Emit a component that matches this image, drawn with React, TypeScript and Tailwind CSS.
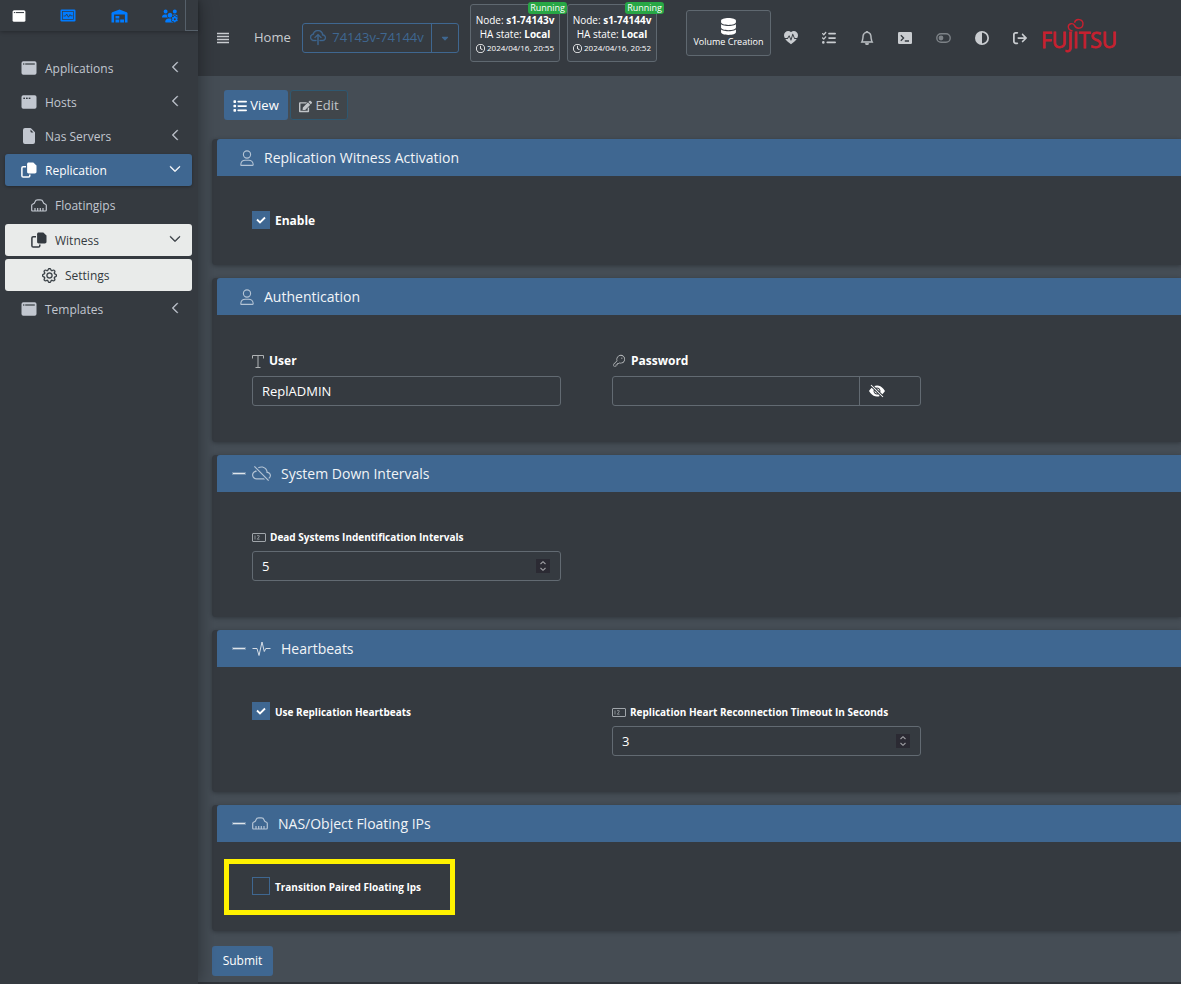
import React from 'react';
import {
  FaListCheck,
  FaCircleHalfStroke,
  FaArrowRightFromBracket,
  FaDatabase,
  FaRegClock,
  FaList,
  FaUsersGear,
  FaCaretDown,
} from 'react-icons/fa6';
import { FaEdit } from 'react-icons/fa';
import {
  BsBell,
  BsChevronDown,
  BsChevronLeft,
  BsCloudSlash,
  BsCloudUpload,
  BsEyeSlashFill,
  BsFileEarmarkFill,
  BsGear,
  BsHeartPulseFill,
} from 'react-icons/bs';
import { PiKeyLight } from 'react-icons/pi';

interface IconProps {
  className?: string;
}

const WindowIcon: React.FC<IconProps & { dots?: boolean }> = ({ className, dots }) => (
  <svg viewBox="0 0 16 14" className={className} aria-hidden="true">
    <rect x="0.5" y="0.3" width="15" height="13.4" rx="1.8" fill="currentColor" />
    {dots ? (
      <g fill="#343a40">
        <rect x="2.3" y="2.6" width="1.7" height="1.4" />
        <rect x="5" y="2.6" width="1.7" height="1.4" />
        <rect x="7.7" y="2.6" width="1.7" height="1.4" />
      </g>
    ) : (
      <g fill="#343a40">
        <rect x="2" y="2.4" width="1.4" height="1.2" />
        <rect x="4.2" y="2.4" width="9.6" height="1.2" />
      </g>
    )}
  </svg>
);

const MonitorIcon: React.FC<IconProps> = ({ className }) => (
  <svg viewBox="0 0 16 13" className={className} aria-hidden="true">
    <rect x="0.5" y="0.5" width="15" height="12" rx="1.2" fill="currentColor" />
    <rect x="2.6" y="2.6" width="10.8" height="7.8" fill="none" stroke="#343a40" strokeWidth="0.7" />
    <path d="M3.5 7h2l1.2-2 1.8 3.2L10 5.5l.8 1.3h1.8" fill="none" stroke="#343a40" strokeWidth="0.8" />
  </svg>
);

const WarehouseIcon: React.FC<IconProps> = ({ className }) => (
  <svg viewBox="0 0 16 14" className={className} fill="currentColor" aria-hidden="true">
    <path d="M8 .4 15.2 3.2c.5.2.8.6.8 1.1V13.6h-2.6V5.6H2.6v8H0V4.3c0-.5.3-.9.8-1.1z" />
    <path d="M4 7h3.8v2.6H4zM4 10.6h3.8v3H4zM8.7 10.6h3.8v3H8.7z" />
  </svg>
);

const CopyIcon: React.FC<IconProps> = ({ className }) => (
  <svg viewBox="0 0 16 16" className={className} aria-hidden="true">
    <path
      d="M5 4.8H2.2c-.7 0-1.3.6-1.3 1.3v7.6c0 .7.6 1.3 1.3 1.3h5.3c.7 0 1.3-.6 1.3-1.3V12.5"
      fill="none"
      stroke="currentColor"
      strokeWidth="1.5"
    />
    <path d="M7.7.5h4.6l3.2 3v6.2c0 1-.7 1.7-1.7 1.7H7.7c-1 0-1.6-.7-1.6-1.7V2.2c0-1 .6-1.7 1.6-1.7z" fill="currentColor" />
  </svg>
);

const EthernetIcon: React.FC<IconProps> = ({ className }) => (
  <svg viewBox="0 0 16 13" className={className} fill="none" stroke="currentColor" strokeWidth="1.2" aria-hidden="true">
    <path d="M.7 11V6.5c0-.6.3-1 .8-1.2L3.2 4.4 4 2.7C4.4 1.5 5.5.9 6.7.9h2.6c1.2 0 2.3.6 2.7 1.8l.8 1.7 1.7.9c.5.2.8.6.8 1.2V11c0 .6-.4 1-1 1H1.7c-.6 0-1-.4-1-1z" />
    <path d="M4 12V9M6.7 12V9M9.3 12V9M12 12V9" />
  </svg>
);

const PersonIcon: React.FC<IconProps> = ({ className }) => (
  <svg viewBox="0 0 14 16" className={className} fill="none" stroke="currentColor" strokeWidth="1.1" aria-hidden="true">
    <circle cx="7" cy="4.5" r="3.6" />
    <path d="M.8 14.8c0-2.9 2-4.6 4.6-4.6h3.2c2.6 0 4.6 1.7 4.6 4.6 0 .4-.2.6-.6.6H1.4c-.4 0-.6-.2-.6-.6z" />
  </svg>
);

const PulseIcon: React.FC<IconProps> = ({ className }) => (
  <svg viewBox="0 0 18 16" className={className} fill="none" stroke="currentColor" strokeLinejoin="round" aria-hidden="true">
    <path d="M0 7.5h4.5L6.5 14.5 9.5 1l2.3 9.5L13.3 7.5H18" />
  </svg>
);

const SerifTIcon: React.FC<IconProps> = ({ className }) => (
  <svg viewBox="0 0 12 13" className={className} fill="none" stroke="currentColor" aria-hidden="true">
    <path d="M.5 3.5v-3h11v3M6 .5v12M3.5 12.5h5" />
  </svg>
);

const NumberIcon: React.FC<IconProps> = ({ className }) => (
  <svg viewBox="0 0 14 9" className={className} aria-hidden="true">
    <rect x="0.5" y="0.5" width="13" height="8" rx="0.5" fill="none" stroke="currentColor" />
    <path d="M3 2.5v4M5 2.7h2.2v1L5.3 6.2h2.2" fill="none" stroke="currentColor" strokeWidth="0.8" />
  </svg>
);

const MenuIcon: React.FC<IconProps> = ({ className }) => (
  <svg viewBox="0 0 12 12" className={className} stroke="currentColor" strokeWidth="1.4" aria-hidden="true">
    <path d="M0 1.5h12M0 4.5h12M0 7.5h12M0 10.5h12" />
  </svg>
);

const TerminalIcon: React.FC<IconProps> = ({ className }) => (
  <svg viewBox="0 0 14 12" className={className} aria-hidden="true">
    <rect width="14" height="12" rx="1.2" fill="currentColor" />
    <path d="M2.8 3.2 5.6 6 2.8 8.8M6.8 9H11" fill="none" stroke="#353a40" strokeWidth="1.3" />
  </svg>
);

const ToggleIcon: React.FC<IconProps> = ({ className }) => (
  <svg viewBox="0 0 15 10" className={className} aria-hidden="true">
    <rect x="0.8" y="0.8" width="13.4" height="8.4" rx="4.2" fill="none" stroke="currentColor" strokeWidth="1.4" />
    <circle cx="5" cy="5" r="2.4" fill="currentColor" />
  </svg>
);

const FujitsuLogo: React.FC = () => (
  <svg viewBox="0 0 76 40" className="h-10 w-[76px]" role="img" aria-label="FUJITSU">
    <path
      d="M30.5 13C28 12.5 26.3 11 26.3 8.8a3.3 3.3 0 0 1 6.2-1.4C33.5 9.6 35 10.2 36.7 10.2a4.3 4.3 0 1 0-4.2-5.4"
      fill="none"
      stroke="#c8202f"
      strokeWidth="1.4"
    />
    <text
      x="-1"
      y="30"
      fontSize="21"
      fontFamily="Open Sans, sans-serif"
      fill="#c8202f"
      stroke="#c8202f"
      strokeWidth="0.8"
    >
      FUJITSU
    </text>
  </svg>
);

const NavItem: React.FC<{
  icon: React.ReactNode;
  label: string;
  indent: string;
  tone?: string;
  state?: 'open' | 'closed';
}> = ({ icon, label, indent, tone = 'text-[#c2c7d0]', state }) => (
  <a href="#" className={`flex h-8 items-center rounded-[3px] pr-[11px] text-[12px] ${indent} ${tone}`}>
    {icon}
    <span className="ml-2 flex-1 pt-px">{label}</span>
    {state === 'closed' && <BsChevronLeft className="mb-0.5 size-3 stroke-1" />}
    {state === 'open' && <BsChevronDown className="mb-0.5 size-3 stroke-1" />}
  </a>
);

const Sidebar: React.FC = () => (
  <aside className="relative z-10 w-[198px] shrink-0 bg-[#353a40] shadow-[0_0_18px_rgba(0,0,0,0.4)]">
    <div className="flex h-[31px] shadow-[0_1px_4px_rgba(0,0,0,0.3)]">
      <div className="flex flex-1 items-center justify-between pr-[7px] pl-3 text-[#007bff]">
        <a href="#" aria-label="Applications"><WindowIcon className="h-3 w-[14px] text-white" /></a>
        <a href="#" aria-label="Monitoring"><MonitorIcon className="h-[13px] w-4" /></a>
        <a href="#" aria-label="Storage"><WarehouseIcon className="h-[14px] w-[17px]" /></a>
        <a href="#" aria-label="Users"><FaUsersGear className="size-4" /></a>
      </div>
      <div className="w-[13px] border-b border-l border-[#56606a]" />
    </div>
    <nav className="pt-[21px] pr-1.5 pl-[5px]">
      <ul className="flex flex-col gap-0.5">
        <li><NavItem icon={<WindowIcon className="h-[14px] w-4" />} label="Applications" indent="pl-4" state="closed" /></li>
        <li><NavItem icon={<WindowIcon dots className="h-[14px] w-4" />} label="Hosts" indent="pl-4" state="closed" /></li>
        <li><NavItem icon={<BsFileEarmarkFill className="size-4" />} label="Nas Servers" indent="pl-4" state="closed" /></li>
        <li>
          <NavItem
            icon={<CopyIcon className="size-4" />}
            label="Replication"
            indent="pl-4"
            tone="bg-[#3f6791] text-white shadow-[0_1px_3px_rgba(0,0,0,0.3)]"
            state="open"
          />
          <ul className="mt-[3px] flex flex-col gap-[3px]">
            <li><NavItem icon={<EthernetIcon className="h-[13px] w-4" />} label="Floatingips" indent="pl-[26px]" /></li>
            <li>
              <NavItem
                icon={<CopyIcon className="size-4" />}
                label="Witness"
                indent="pl-[26px]"
                tone="bg-[#e9ebea] text-[#343a40]"
                state="open"
              />
            </li>
            <li>
              <NavItem
                icon={<BsGear className="size-[15px] stroke-[0.4]" />}
                label="Settings"
                indent="pl-[37px]"
                tone="bg-[#e9ebea] text-[#343a40]"
              />
            </li>
          </ul>
        </li>
        <li><NavItem icon={<WindowIcon className="h-[14px] w-4" />} label="Templates" indent="pl-4" state="closed" /></li>
      </ul>
    </nav>
  </aside>
);

const NodeBox: React.FC<{ name: string; time: string }> = ({ name, time }) => (
  <div className="relative flex h-[58px] w-[90px] flex-col items-center rounded-[3px] border border-[#5f6870] bg-[#3b4148] pt-2 text-[10px] leading-[14px] whitespace-nowrap text-white">
    <span className="absolute -top-[3px] -right-2 rounded-[3px] bg-[#28a745] px-0.5 text-[9px] leading-3">Running</span>
    <span>Node: <b>{name}</b></span>
    <span>HA state: <b>Local</b></span>
    <span className="flex items-center gap-0.5 text-[8px]">
      <FaRegClock className="size-[9px]" />
      {time}
    </span>
  </div>
);

const TopBar: React.FC = () => (
  <header className="flex h-[76px] items-center bg-[#353a40] pl-[19px] text-[13px] text-[#c9ccd0]">
    <button type="button" aria-label="Toggle menu"><MenuIcon className="size-3" /></button>
    <a href="#" className="ml-[25px] w-12">Home</a>
    <div className="flex h-[30px] w-[157px] rounded-[3px] border border-[#3f6791] text-[#3f6791]">
      <button type="button" className="flex flex-1 items-center justify-center gap-1.5">
        <BsCloudUpload className="size-4 stroke-[0.4]" />
        74143v-74144v
      </button>
      <button type="button" aria-label="Choose cluster" className="flex w-[27px] items-center justify-center border-l border-[#3f6791]">
        <FaCaretDown className="size-[10px]" />
      </button>
    </div>
    <div className="-mt-[10px] ml-[11px] flex gap-[7px]">
      <NodeBox name="s1-74143v" time="2024/04/16, 20:55" />
      <NodeBox name="s1-74144v" time="2024/04/16, 20:52" />
    </div>
    <button
      type="button"
      className="-mt-[10px] ml-[29px] flex h-[46px] w-[85px] flex-col items-center justify-center rounded-[3px] border border-[#5f6870] bg-[#3b4148] text-[9px] leading-[14px] whitespace-nowrap text-white"
    >
      <FaDatabase className="size-[17px]" />
      Volume Creation
    </button>
    <nav className="ml-[13px] flex items-center gap-6">
      <a href="#" aria-label="Health"><BsHeartPulseFill className="size-[14px]" /></a>
      <a href="#" aria-label="Tasks"><FaListCheck className="size-[14px]" /></a>
      <a href="#" aria-label="Alerts"><BsBell className="size-[14px] stroke-[0.5]" /></a>
      <a href="#" aria-label="Terminal"><TerminalIcon className="h-3 w-[14px]" /></a>
      <a href="#" aria-label="Switch mode"><ToggleIcon className="h-[10px] w-[15px] text-[#7d8287]" /></a>
      <a href="#" aria-label="Contrast"><FaCircleHalfStroke className="size-[14px]" /></a>
      <a href="#" aria-label="Log out"><FaArrowRightFromBracket className="size-[14px]" /></a>
    </nav>
    <a href="#" className="ml-[15px]"><FujitsuLogo /></a>
  </header>
);

const Card: React.FC<{ icon: React.ReactNode; title: string; collapsible?: boolean; children: React.ReactNode }> = ({
  icon,
  title,
  collapsible,
  children,
}) => (
  <section className="rounded-l-[4px] bg-[#353a40] pl-[5px] shadow-[0_1px_4px_rgba(0,0,0,0.3)]">
    <h2
      className={`flex h-[37px] items-center rounded-tl-[3px] bg-[#3f6791] text-[14px] text-[#f1f4f7] ${
        collapsible ? 'pl-4' : 'pl-[23px]'
      }`}
    >
      {collapsible && <span className="mr-[7px] h-px w-3 bg-[#dfe5eb] outline-1 outline-[#dfe5eb]/30" />}
      {icon}
      <span className="ml-[10px]">{title}</span>
    </h2>
    <div className="grid max-w-[740px] grid-cols-2 gap-x-[51px] pt-[35px] pr-9 pb-9 pl-[35px]">{children}</div>
  </section>
);

const CheckField: React.FC<{ id: string; label: string; size: string; checked?: boolean; marked?: boolean }> = ({
  id,
  label,
  size,
  checked,
  marked,
}) => (
  <div className="relative flex h-[18px] items-center">
    <input
      id={id}
      type="checkbox"
      defaultChecked={checked}
      className="peer size-[18px] appearance-none border border-[#3f6791] checked:bg-[#3f6791]"
    />
    <svg viewBox="0 0 18 18" className="pointer-events-none absolute left-0 hidden size-[18px] peer-checked:block" aria-hidden="true">
      <path d="M5 8.5 8 11.5 13 6.5" fill="none" stroke="#fff" strokeWidth="1.8" />
    </svg>
    <label htmlFor={id} className={`ml-[5px] pt-0.5 font-bold whitespace-nowrap text-white ${size}`}>{label}</label>
    {marked && <div className="pointer-events-none absolute -top-[18px] -left-7 h-14 w-[231px] border-[5px] border-[#fff200]" />}
  </div>
);

const NumberField: React.FC<{ id: string; label: string; value: number }> = ({ id, label, value }) => (
  <div>
    <label htmlFor={id} className="mb-1 flex h-5 items-center gap-1 pt-px text-[10px] font-bold whitespace-nowrap text-white">
      <NumberIcon className="h-[9px] w-[14px] text-[#a0a5aa]" />
      {label}
    </label>
    <div className="flex h-[30px] items-center rounded-[3px] border border-[#626a72] pr-[10px]">
      <input
        id={id}
        type="number"
        defaultValue={value}
        className="h-full min-w-0 flex-1 [appearance:textfield] px-[9px] text-[13px] text-white outline-none [&::-webkit-inner-spin-button]:appearance-none"
      />
      <svg viewBox="0 0 14 14" className="size-[14px] bg-[#2b2a33]" aria-hidden="true">
        <path d="M4.5 5 7 2.7 9.5 5M4.5 9 7 11.3 9.5 9" fill="none" stroke="#a0a0a5" strokeWidth="1.1" />
      </svg>
    </div>
  </div>
);

const labelCls = 'mb-1 flex h-[22px] items-center gap-[5px] text-[12px] font-bold text-white';

export default function App() {
  return (
    <div className="flex min-h-screen overflow-hidden bg-[#454d55] font-['Open_Sans','Noto_Sans',sans-serif]">
      <Sidebar />
      <div className="flex min-w-0 flex-1 flex-col">
        <TopBar />
        <main className="flex-1 border-b-2 border-[#30343a] pt-[14px] pb-1.5 pl-[14px]">
          <div className="ml-3 flex gap-0.5 text-[13px]">
            <button type="button" className="flex h-[30px] w-16 items-center justify-center gap-[3px] rounded-[3px] bg-[#3f6791] pt-0.5 text-white">
              <FaList className="size-[14px]" />
              View
            </button>
            <button type="button" className="flex h-[30px] w-[58px] items-center justify-center gap-[3px] rounded-[3px] border border-[#2f5870] bg-[#40464b] pt-0.5 text-[#c0c4c8]">
              <FaEdit className="size-[13px]" />
              Edit
            </button>
          </div>

          <form className="mt-[19px] flex flex-col gap-[13px]">
            <Card icon={<PersonIcon className="h-4 w-[14px] text-[#b4c4d5]" />} title="Replication Witness Activation">
              <CheckField id="enable" label="Enable" size="text-[12px]" checked />
            </Card>

            <Card icon={<PersonIcon className="h-4 w-[14px] text-[#b4c4d5]" />} title="Authentication">
              <div>
                <label htmlFor="user" className={labelCls}>
                  <SerifTIcon className="h-[13px] w-3 text-[#b0b3b5]" />
                  User
                </label>
                <input
                  id="user"
                  type="text"
                  defaultValue="ReplADMIN"
                  className="h-[30px] w-full rounded-[3px] border border-[#626a72] px-[9px] text-[13px] text-white outline-none"
                />
              </div>
              <div>
                <label htmlFor="password" className={labelCls}>
                  <PiKeyLight className="size-[14px] text-[#c0c3c5]" />
                  Password
                </label>
                <div className="flex h-[30px] rounded-[3px] border border-[#626a72]">
                  <input id="password" type="password" className="min-w-0 flex-1 px-[9px] text-[13px] text-white outline-none" />
                  <button type="button" aria-label="Show password" className="flex w-[61px] items-center border-l border-[#626a72] pl-[9px] text-white">
                    <BsEyeSlashFill className="size-4" />
                  </button>
                </div>
              </div>
            </Card>

            <Card collapsible icon={<BsCloudSlash className="size-[19px] text-[#b4c4d5]" />} title="System Down Intervals">
              <NumberField id="dead-intervals" label="Dead Systems Indentification Intervals" value={5} />
            </Card>

            <Card collapsible icon={<PulseIcon className="h-4 w-[19px] text-[#d5dde6]" />} title="Heartbeats">
              <CheckField id="use-heartbeats" label="Use Replication Heartbeats" size="text-[10px]" checked />
              <NumberField id="reconnect-timeout" label="Replication Heart Reconnection Timeout In Seconds" value={3} />
            </Card>

            <Card collapsible icon={<EthernetIcon className="h-[13px] w-4 text-[#b4c4d5]" />} title="NAS/Object Floating IPs">
              <CheckField id="paired-ips" label="Transition Paired Floating Ips" size="text-[10px]" marked />
            </Card>

            <button type="submit" className="mt-0.5 h-[30px] w-[61px] rounded-[3px] bg-[#3f6791] text-[12px] text-white">
              Submit
            </button>
          </form>
        </main>
      </div>
    </div>
  );
}
